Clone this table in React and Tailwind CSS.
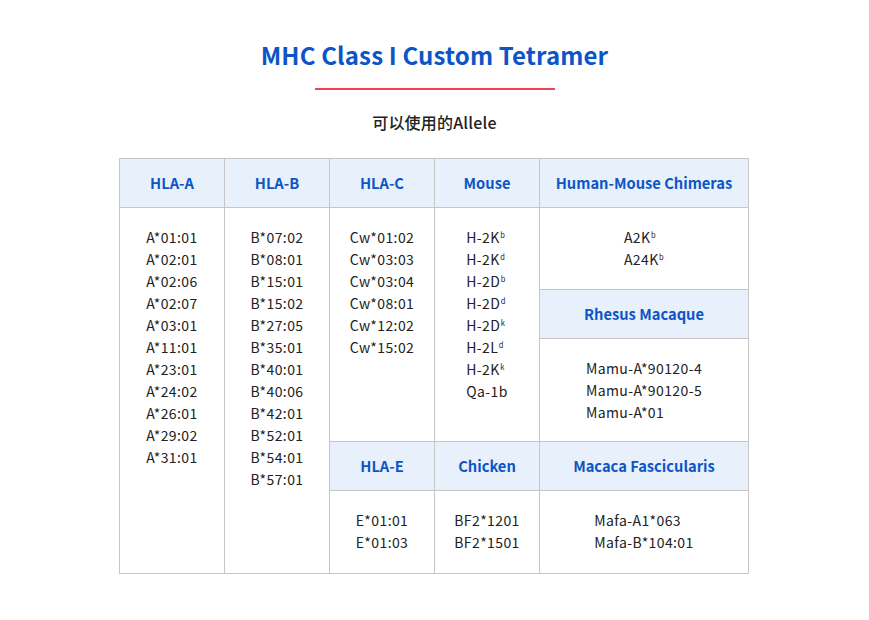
import React from "react";

const FONT = {
  fontFamily: '"Noto Sans CJK SC", "Noto Sans", sans-serif',
};

const Sup = ({ children }) => (
  <span className="text-[7.5px] leading-none align-[5px] ml-[0.5px]">{children}</span>
);

const HEADER =
  "bg-[#e8f0fc] flex items-center justify-center text-[14.7px] font-bold text-[#0d55c6]";
const BODY =
  "bg-white flex justify-center pt-[18px] text-[14px] leading-[22px] tracking-[0.4px] text-[#222]";

function Cell({ items, className = "" }) {
  return (
    <div className={`${BODY} ${className}`}>
      <div className="text-left">
        {items.map((it, i) => (
          <div key={i}>{it}</div>
        ))}
      </div>
    </div>
  );
}

const HLA_A = [
  "A*01:01", "A*02:01", "A*02:06", "A*02:07", "A*03:01", "A*11:01",
  "A*23:01", "A*24:02", "A*26:01", "A*29:02", "A*31:01",
];
const HLA_B = [
  "B*07:02", "B*08:01", "B*15:01", "B*15:02", "B*27:05", "B*35:01",
  "B*40:01", "B*40:06", "B*42:01", "B*52:01", "B*54:01", "B*57:01",
];
const HLA_C = ["Cw*01:02", "Cw*03:03", "Cw*03:04", "Cw*08:01", "Cw*12:02", "Cw*15:02"];
const MOUSE = [
  <>H-2K<Sup>b</Sup></>,
  <>H-2K<Sup>d</Sup></>,
  <>H-2D<Sup>b</Sup></>,
  <>H-2D<Sup>d</Sup></>,
  <>H-2D<Sup>k</Sup></>,
  <>H-2L<Sup>d</Sup></>,
  <>H-2K<Sup>k</Sup></>,
  "Qa-1b",
];
const CHIMERA = [<>A2K<Sup>b</Sup></>, <>A24K<Sup>b</Sup></>];
const RHESUS = ["Mamu-A*90120-4", "Mamu-A*90120-5", "Mamu-A*01"];
const HLA_E = ["E*01:01", "E*01:03"];
const CHICKEN = ["BF2*1201", "BF2*1501"];
const MAFA = ["Mafa-A1*063", "Mafa-B*104:01"];

export default function App() {
  return (
    <div className="min-h-screen bg-white flex flex-col items-center pt-[39px]" style={FONT}>
      <h1 className="text-[24px] leading-[32px] font-bold text-[#0d55c6] tracking-[0.15px]">
        MHC Class I Custom Tetramer
      </h1>
      <div className="mt-[17px] w-[240px] h-[2px] bg-[#ef4450]" />
      <p className="mt-[20px] text-[16px] leading-[24px] font-medium text-[#222] tracking-[0.2px]">
        可以使用的Allele
      </p>

      {/* allele table: 1px grey gaps draw the cell borders */}
      <div className="mt-[24px] mr-[1px] grid grid-cols-[104px_104px_104px_104px_208px] grid-rows-[48px_81px_48px_102px_48px_82px] gap-px p-px bg-[#c6c6c6]">
        <div className={HEADER}>HLA-A</div>
        <div className={HEADER}>HLA-B</div>
        <div className={HEADER}>HLA-C</div>
        <div className={HEADER}>Mouse</div>
        <div className={HEADER}>Human-Mouse Chimeras</div>

        <Cell items={HLA_A} className="row-span-5" />
        <Cell items={HLA_B} className="row-span-5" />
        <Cell items={HLA_C} className="row-span-3" />
        <Cell items={MOUSE} className="row-span-3" />
        <Cell items={CHIMERA} />

        <div className={HEADER}>Rhesus Macaque</div>
        <Cell items={RHESUS} />

        <div className={HEADER}>HLA-E</div>
        <div className={HEADER}>Chicken</div>
        <div className={HEADER}>Macaca Fascicularis</div>

        <Cell items={HLA_E} />
        <Cell items={CHICKEN} />
        <Cell items={MAFA} />
      </div>
    </div>
  );
}
